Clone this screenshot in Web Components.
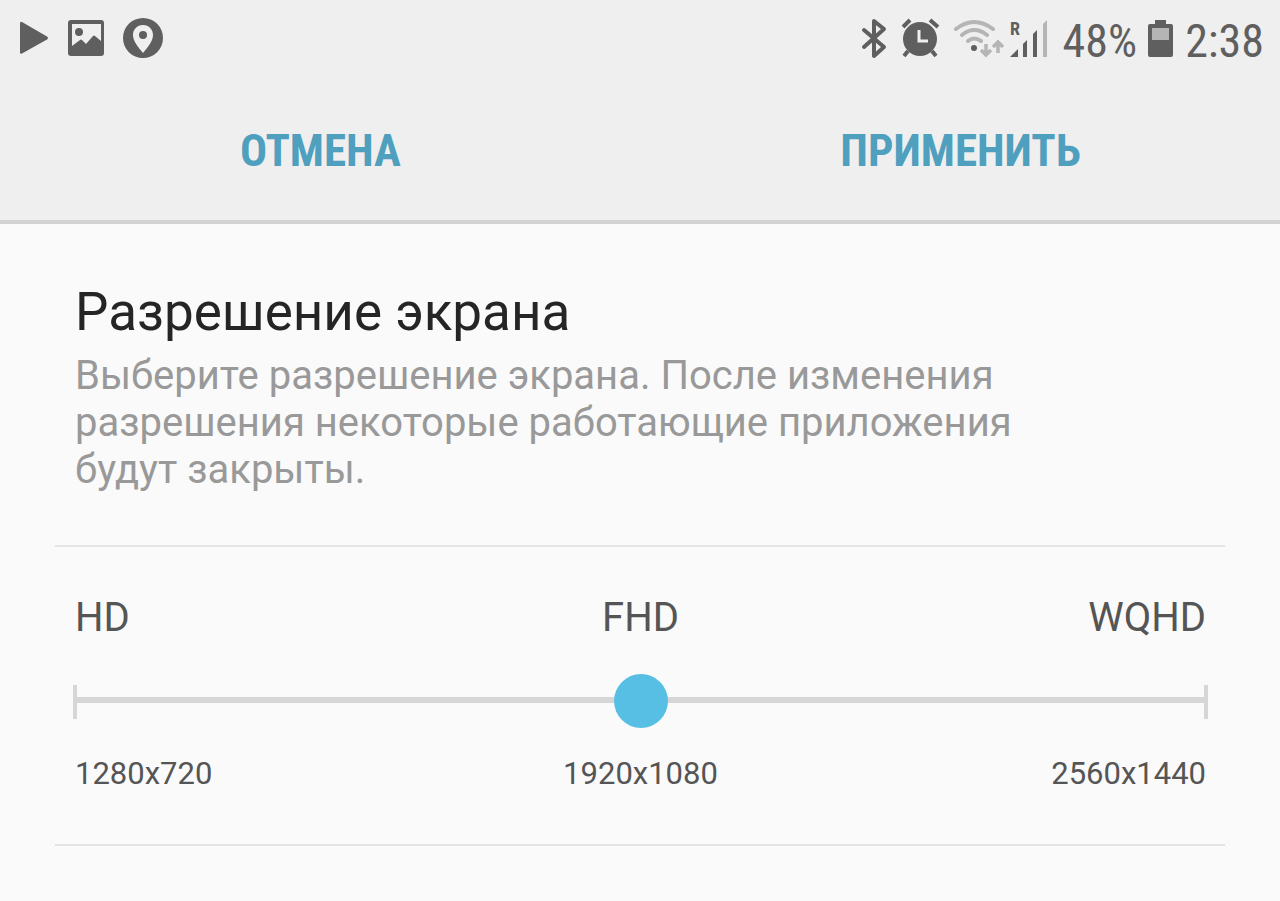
<!DOCTYPE html>
<html lang="ru">
<head>
<meta charset="utf-8">
<meta name="viewport" content="width=device-width, initial-scale=1">
<title>Разрешение экрана</title>
<style>
  body {
    margin: 0;
    background: #fafafa;
    color: #555;
    font-family: Roboto, "Noto Sans", sans-serif;
  }
</style>
</head>
<body>
<settings-screen></settings-screen>

<script>
// status icons, drawn on the same 48px high strip
const ICONS = {
  play: { w: 34, svg: '<path d="M4 9.500v29q0 2 2 1l25-14q2-1.500 0-3L6 8q-2-1-2 1.500z"/>' },
  image: { w: 40, svg: '<path fill-rule="evenodd" d="M6 6h29q3 0 3 3v30q0 3-3 3H5q-3 0-3-3V9q0-3 3-3zM6 10v22l8-6q1-1 2 0l4 4 7-8q1-1 2 0l6 5V10z"/><circle cx="13" cy="18" r="4"/>' },
  pin: { w: 42, svg: '<path fill-rule="evenodd" d="M21 4a20 20 0 1 1 0 40a20 20 0 1 1 0-40zM21 11c-6 0-10 4.500-10 10c0 6 5 12 10 18c5-6 10-12 10-18c0-5.500-4-10-10-10z"/><circle cx="21" cy="21" r="4"/>' },
  bluetooth: { w: 36, svg: '<path fill="none" stroke="currentColor" stroke-width="4" stroke-linejoin="round" stroke-linecap="round" d="M4 16l20 17-10 9V7l10 8L4 33"/>' },
  alarm: { w: 48, svg: '<circle cx="20" cy="25" r="17"/><path fill="none" stroke="currentColor" stroke-width="4" d="M3 13l7-7M30 6l8 7M8 37l-4 5M32 37l4 5"/><path fill="none" stroke="#efefef" stroke-width="3" d="M19 16v11h9"/>' },
  wifi: { w: 52, svg: '<g fill="none" stroke="#b5b5b5" stroke-width="4"><g stroke-linecap="round"><path d="M4 15Q22 1 41 15M10 21Q22 11 35 21M16 27Q22 22 29 27"/></g><path stroke-width="3.500" d="M34 30v10M29 36l5 5 5-5M46 39V29M41 33l5-5 5 5"/></g><circle cx="22" cy="34" r="3"/>' },
  signal: { w: 45, svg: '<text x="2" y="21" font-size="18" font-weight="700">R</text><path d="M2 43l8-8v8zM15 43V30l4-4v17zM25 43V20l4-4v27z"/><path fill="#b5b5b5" d="M35 43V10l4-4v37z"/>' },
  battery: { w: 28, svg: '<path d="M8 6h11v4h5q2 0 2 2v29q0 2-2 2H3q-2 0-2-2V12q0-2 2-2h5z"/><path fill="#b5b5b5" d="M5 14h17v12H5z"/>' }
};

class StatusIcon extends HTMLElement {
  connectedCallback() {
    const icon = ICONS[this.getAttribute('name')];
    this.attachShadow({ mode: 'open' });
    this.shadowRoot.innerHTML = `
      <style>
        :host { display: block; flex: none; padding-bottom: 6px; color: #5f5f5f; }
        svg { display: block; fill: currentColor; }
      </style>
      <svg width="${icon.w}" height="48" viewBox="0 0 ${icon.w} 48" aria-hidden="true">${icon.svg}</svg>
    `;
  }
}

class StatusBar extends HTMLElement {
  connectedCallback() {
    this.attachShadow({ mode: 'open' });
    this.shadowRoot.innerHTML = `
      <style>
        :host {
          display: flex;
          align-items: center;
          justify-content: space-between;
          height: 82px;
          padding: 0 16px;
          box-sizing: border-box;
          color: #5f5f5f;
          font: 46px/48px "Roboto Condensed", Roboto, sans-serif;
        }
        .left { display: flex; gap: 16px; }
        .right { display: flex; gap: 10px; align-items: center; }
        .radios { display: flex; gap: 4px; }
      </style>
      <div class="left">
        <status-icon name="play"></status-icon>
        <status-icon name="image"></status-icon>
        <status-icon name="pin"></status-icon>
      </div>
      <div class="right">
        <div class="radios">
          <status-icon name="bluetooth"></status-icon>
          <status-icon name="alarm"></status-icon>
          <status-icon name="wifi"></status-icon>
          <status-icon name="signal"></status-icon>
        </div>
        <span>48%</span>
        <status-icon name="battery"></status-icon>
        <span>2:38</span>
      </div>
    `;
  }
}

class ActionBar extends HTMLElement {
  connectedCallback() {
    this.attachShadow({ mode: 'open' });
    this.shadowRoot.innerHTML = `
      <style>
        :host { display: grid; grid-template-columns: 1fr 1fr; height: 138px; }
        button {
          border: 0;
          padding: 0 0 0 1px;
          background: none;
          color: #4f9fbe;
          font: bold 45px/48px "Roboto Condensed", Roboto, sans-serif;
          cursor: pointer;
        }
        button:active { background: #e2e2e2; }
      </style>
      <button type="button">ОТМЕНА</button>
      <button type="button">ПРИМЕНИТЬ</button>
    `;
  }
}

class SettingIntro extends HTMLElement {
  connectedCallback() {
    this.attachShadow({ mode: 'open' });
    this.shadowRoot.innerHTML = `
      <style>
        :host {
          display: block;
          padding: 52px 164px 52px 20px;
          border-bottom: 2px solid #e4e4e4;
        }
        h1 { margin: 0 0 4px; color: #252525; font-size: 53px; line-height: 72px; font-weight: 400; }
        p { margin: 0; color: #999; font-size: 40px; line-height: 47px; }
      </style>
      <h1><slot name="title"></slot></h1>
      <p><slot></slot></p>
    `;
  }
}

class ResolutionSlider extends HTMLElement {
  connectedCallback() {
    this.attachShadow({ mode: 'open' });
    this.shadowRoot.innerHTML = `
      <style>
        :host {
          display: block;
          padding: 47px 17px 46px 18px;
          border-bottom: 2px solid #e4e4e4;
        }
        .row { display: grid; grid-template-columns: 1fr 1fr 1fr; padding: 0 2px; }
        .row > :nth-child(2) { text-align: center; }
        .row > :nth-child(3) { text-align: right; }
        .names { font-size: 40px; line-height: 48px; }
        .sizes { font-size: 31px; line-height: 48px; }
        .track {
          display: flex;
          align-items: flex-start;
          margin: 43px 0 31px;
          height: 34px;
          border: solid #d6d6d6;
          border-width: 0 4px;
        }
        input {
          -webkit-appearance: none;
          appearance: none;
          flex: 1;
          min-width: 0;
          height: 30px;
          margin: 0;
          background: none;
          outline: none;
        }
        input::-webkit-slider-runnable-track { height: 6px; background: #d6d6d6; }
        input::-webkit-slider-thumb {
          -webkit-appearance: none;
          width: 54px;
          height: 54px;
          margin-top: -23px;
          border-radius: 50%;
          background: #57bfe3;
        }
      </style>
      <label class="row names" for="res"><span>HD</span><span>FHD</span><span>WQHD</span></label>
      <div class="track"><input id="res" type="range" min="0" max="2" step="1" value="1"></div>
      <div class="row sizes"><span>1280x720</span><span>1920x1080</span><span>2560x1440</span></div>
    `;
  }
}

class SettingsScreen extends HTMLElement {
  connectedCallback() {
    this.attachShadow({ mode: 'open' });
    this.shadowRoot.innerHTML = `
      <style>
        :host { display: block; }
        header { background: #efefef; border-bottom: 4px solid #d2d2d2; }
        main { padding: 0 55px; }
      </style>
      <header>
        <status-bar></status-bar>
        <action-bar></action-bar>
      </header>
      <main>
        <setting-intro>
          <span slot="title">Разрешение экрана</span>
          Выберите разрешение экрана. После изменения разрешения некоторые работающие приложения будут закрыты.
        </setting-intro>
        <resolution-slider></resolution-slider>
      </main>
    `;
  }
}

customElements.define('status-icon', StatusIcon);
customElements.define('status-bar', StatusBar);
customElements.define('action-bar', ActionBar);
customElements.define('setting-intro', SettingIntro);
customElements.define('resolution-slider', ResolutionSlider);
customElements.define('settings-screen', SettingsScreen);
</script>
</body>
</html>
